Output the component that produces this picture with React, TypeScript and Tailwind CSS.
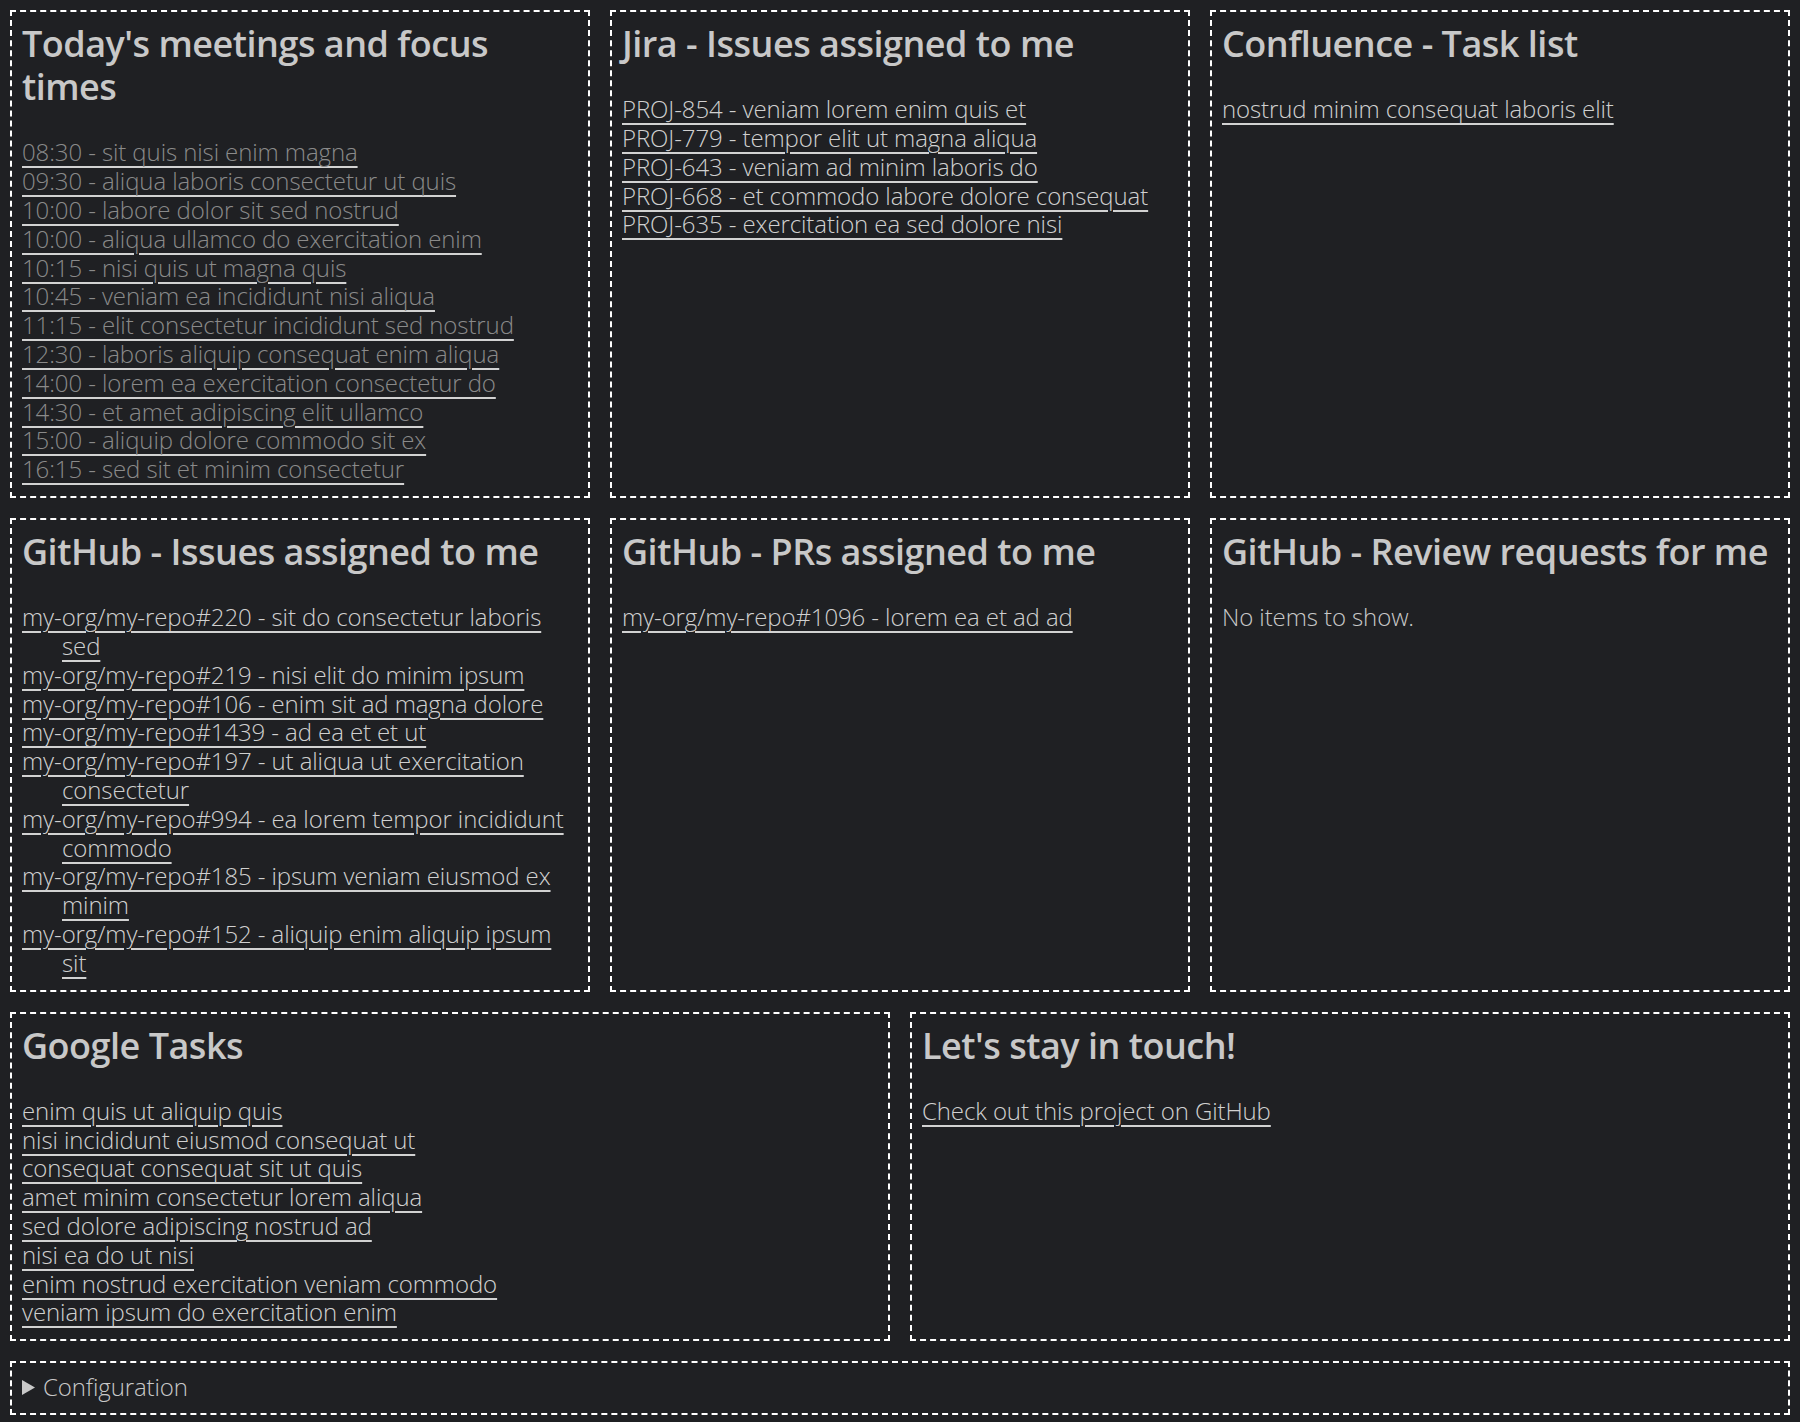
import React from 'react';

const meetings = [
  '08:30 - sit quis nisi enim magna',
  '09:30 - aliqua laboris consectetur ut quis',
  '10:00 - labore dolor sit sed nostrud',
  '10:00 - aliqua ullamco do exercitation enim',
  '10:15 - nisi quis ut magna quis',
  '10:45 - veniam ea incididunt nisi aliqua',
  '11:15 - elit consectetur incididunt sed nostrud',
  '12:30 - laboris aliquip consequat enim aliqua',
  '14:00 - lorem ea exercitation consectetur do',
  '14:30 - et amet adipiscing elit ullamco',
  '15:00 - aliquip dolore commodo sit ex',
  '16:15 - sed sit et minim consectetur',
];

const jira = [
  'PROJ-854 - veniam lorem enim quis et',
  'PROJ-779 - tempor elit ut magna aliqua',
  'PROJ-643 - veniam ad minim laboris do',
  'PROJ-668 - et commodo labore dolore consequat',
  'PROJ-635 - exercitation ea sed dolore nisi',
];

const ghIssues = [
  'my-org/my-repo#220 - sit do consectetur laboris sed',
  'my-org/my-repo#219 - nisi elit do minim ipsum',
  'my-org/my-repo#106 - enim sit ad magna dolore',
  'my-org/my-repo#1439 - ad ea et et ut',
  'my-org/my-repo#197 - ut aliqua ut exercitation consectetur',
  'my-org/my-repo#994 - ea lorem tempor incididunt commodo',
  'my-org/my-repo#185 - ipsum veniam eiusmod ex minim',
  'my-org/my-repo#152 - aliquip enim aliquip ipsum sit',
];

const tasks = [
  'enim quis ut aliquip quis',
  'nisi incididunt eiusmod consequat ut',
  'consequat consequat sit ut quis',
  'amet minim consectetur lorem aliqua',
  'sed dolore adipiscing nostrud ad',
  'nisi ea do ut nisi',
  'enim nostrud exercitation veniam commodo',
  'veniam ipsum do exercitation enim',
];

const linkCls =
  'underline decoration-2 underline-offset-[5px] decoration-[#d2d2d2]';

function Panel({ title, span, children }: { title: string; span: string; children: React.ReactNode }) {
  return (
    <section className={`${span} border-2 border-dashed border-white px-2.5 pt-2.5 pb-3`}>
      <h2 className="m-0 mb-[30px] text-[36px] leading-[43.2px] font-semibold text-[#c8c8c8] tracking-[-0.5px]">
        {title}
      </h2>
      {children}
    </section>
  );
}

function LinkList({ items, dim, hang }: { items: string[]; dim?: boolean; hang?: boolean }) {
  return (
    <ul className="m-0 p-0 list-none">
      {items.map((t, i) => (
        <li key={i} className={hang ? 'pl-10 -indent-10' : ''}>
          <a href="#" className={`${linkCls} ${dim ? 'text-[#8a8a8a]' : 'text-[#d0d0d0]'}`}>
            {t}
          </a>
        </li>
      ))}
    </ul>
  );
}

export default function App() {
  return (
    <div className="min-h-[1422px] bg-[#1f2023] p-2.5 font-['Open_Sans',sans-serif] text-[24px] leading-[28.8px] font-light text-[#d0d0d0] tracking-[-0.1px]">
      <div className="grid grid-cols-6 gap-5">
        <Panel title="Today's meetings and focus times" span="col-span-2">
          <LinkList items={meetings} dim />
        </Panel>
        <Panel title="Jira - Issues assigned to me" span="col-span-2">
          <LinkList items={jira} />
        </Panel>
        <Panel title="Confluence - Task list" span="col-span-2">
          <LinkList items={['nostrud minim consequat laboris elit']} />
        </Panel>

        <Panel title="GitHub - Issues assigned to me" span="col-span-2">
          <LinkList items={ghIssues} hang />
        </Panel>
        <Panel title="GitHub - PRs assigned to me" span="col-span-2">
          <LinkList items={['my-org/my-repo#1096 - lorem ea et ad ad']} />
        </Panel>
        <Panel title="GitHub - Review requests for me" span="col-span-2">
          <p className="m-0 text-[#c8c8c8]">No items to show.</p>
        </Panel>

        <Panel title="Google Tasks" span="col-span-3">
          <LinkList items={tasks} />
        </Panel>
        <Panel title="Let's stay in touch!" span="col-span-3">
          <a href="#" className={linkCls}>
            Check out this project on GitHub
          </a>
        </Panel>

        <details className="col-span-6 border-2 border-dashed border-white px-2.5 pt-2.5 pb-[11px]">
          <summary className="list-none cursor-pointer flex items-center text-[#c8c8c8]">
            <svg width="13" height="15" viewBox="0 0 13 15" className="mr-[8px] shrink-0">
              <path d="M0 0 L13 7.5 L0 15 Z" fill="#c8c8c8" />
            </svg>
            Configuration
          </summary>
        </details>
      </div>
    </div>
  );
}
